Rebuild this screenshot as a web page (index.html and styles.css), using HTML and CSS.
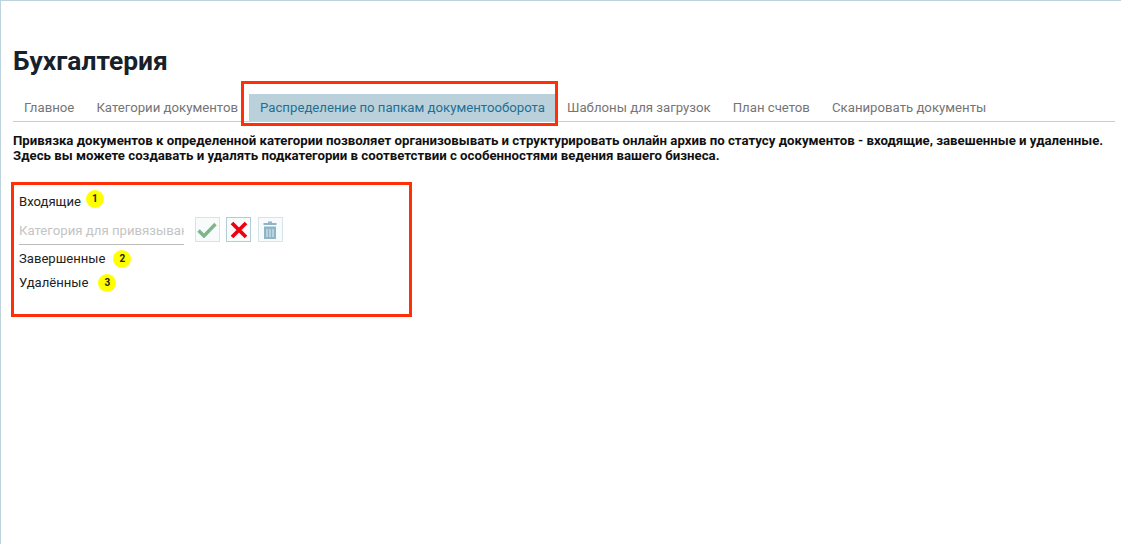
FILE: index.html
```html
<!DOCTYPE html>
<html lang="ru">
<head>
  <meta charset="UTF-8" />
  <title>Бухгалтерия</title>
  <link rel="stylesheet" href="styles.css">
</head>
<body>
  <div class="page">
    <h1>Бухгалтерия</h1>

    <nav class="tabs">
      <a href="#">Главное</a>
      <a href="#">Категории документов</a>
      <a href="#" class="active">Распределение по папкам документооборота</a>
      <a href="#">Шаблоны для загрузок</a>
      <a href="#">План счетов</a>
      <a href="#">Сканировать документы</a>
    </nav>

    <p class="intro">Привязка документов к определенной категории позволяет организовывать и структурировать онлайн архив по статусу документов - входящие, завешенные и удаленные.<br>Здесь вы можете создавать и удалять подкатегории в соответствии с особенностями ведения вашего бизнеса.</p>

    <div class="folders">
      <div class="folder">
        <span>Входящие</span>
        <span class="badge badge-one">1</span>
      </div>

      <div class="edit-row">
        <input type="text" placeholder="Категория для привязывания">
        <button class="icon-btn">
          <svg width="20" height="16" viewBox="0 0 20 16"><path d="M1.5 8.5 L7 14 L18.5 2" fill="none" stroke="#7fb58c" stroke-width="3.4"/></svg>
        </button>
        <button class="icon-btn cancel">
          <svg width="18" height="18" viewBox="0 0 18 18"><path d="M2 2 L16 16 M16 2 L2 16" fill="none" stroke="#f0000f" stroke-width="3.8"/></svg>
        </button>
        <button class="icon-btn">
          <svg width="14" height="18" viewBox="0 0 14 18"><path d="M5 0.5h4v1.5h4.5v2h-13v-2H5z M1 5.5h12V18H1z" fill="#8fb4c6"/><path d="M4 8v8M7 8v8M10 8v8" stroke="#e6eff3" stroke-width="1"/></svg>
        </button>
      </div>

      <div class="folder">
        <span>Завершенные</span>
        <span class="badge badge-two">2</span>
      </div>
      <div class="folder">
        <span>Удалённые</span>
        <span class="badge badge-three">3</span>
      </div>
    </div>
  </div>
</body>
</html>
```

FILE: styles.css
```css
* {
  box-sizing: border-box;
}

html, body {
  height: 100%;
}

body {
  margin: 0;
  background: #fff;
  font-family: Roboto, "Liberation Sans", sans-serif;
  color: #111;
  overflow: hidden;
}

.page {
  height: 100%;
  padding: 45px 6px 0 12px;
  border-top: 1px solid #bcd3dc;
  border-left: 1px solid #bcd3dc;
}

h1 {
  margin: 0;
  font-size: 26.4px;
  line-height: 30px;
  font-weight: 700;
  color: #17212b;
}

.tabs {
  display: flex;
  margin-top: 18px;
  height: 28px;
  border-bottom: 1px solid #c5d0d6;
}

.tabs a {
  position: relative;
  padding: 0 11.05px;
  font-size: 13.2px;
  line-height: 27px;
  color: #757575;
  text-decoration: none;
  white-space: nowrap;
}

.tabs a.active {
  background: #bad1db;
  color: #1f6f92;
}

/* red annotation frame round the active tab */
.tabs a.active::after {
  content: "";
  position: absolute;
  left: -8px;
  right: -2px;
  top: -13px;
  bottom: -5px;
  border: 3px solid #ff3008;
}

.intro {
  margin: 11px 0 0;
  font-size: 13.22px;
  line-height: 15px;
  font-weight: 700;
  color: #111;
}

.folders {
  width: 401px;
  height: 135px;
  margin: 19px 0 0 -2px;
  padding: 4px 5px;
  border: 3px solid #ff3008;
}

.folder {
  display: flex;
  align-items: center;
  height: 24px;
  font-size: 13.1px;
  color: #222;
}

.badge {
  position: relative;
  width: 18px;
  height: 18px;
  border-radius: 50%;
  background: #ffff00;
  font-size: 10px;
  font-weight: 700;
  line-height: 18px;
  text-align: center;
}

.badge-one {
  top: -2px;
  margin-left: 5px;
}

.badge-two {
  top: 1px;
  margin-left: 8px;
}

.badge-three {
  top: 1px;
  margin-left: 10px;
}

.edit-row {
  display: flex;
  align-items: center;
  gap: 6.5px;
  height: 33px;
}

.edit-row input {
  width: 165px;
  height: 30px;
  margin-right: 4.2px;
  padding: 3px 0 0;
  border: 0;
  border-bottom: 1px solid #bbb;
  outline: none;
  font-family: inherit;
  font-size: 13.2px;
}

.edit-row input::placeholder {
  color: #c4c4c4;
}

.icon-btn {
  display: flex;
  align-items: center;
  justify-content: center;
  width: 25px;
  height: 25px;
  padding: 0;
  background: #f8fbfc;
  border: 1px solid #d6e4ea;
}

.icon-btn.cancel {
  border-color: #b4ccd6;
}
```
